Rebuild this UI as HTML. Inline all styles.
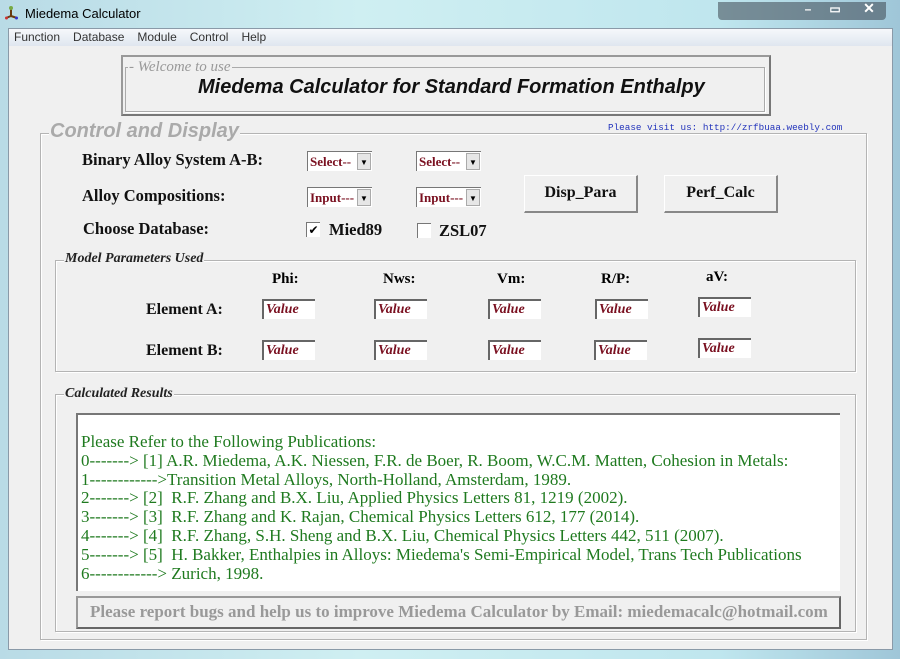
<!DOCTYPE html>
<html><head><style>
*{margin:0;padding:0;box-sizing:border-box}
body{width:900px;height:659px;overflow:hidden;position:relative;background:linear-gradient(90deg,#b9dbe6,#cfeff2 40%,#bfe6ee 80%,#9fc6d8);font-family:"Liberation Serif",serif}
.a{position:absolute}
.client{left:8px;top:28px;width:885px;height:622px;background:#f0f0f0;border:1px solid #8a9aa8}
.menu{left:9px;top:29px;width:883px;height:17px;background:linear-gradient(#f6f8fb,#dfe6ef);font:12px "Liberation Sans",sans-serif;color:#333}
.menu span{margin-left:5px;margin-right:8px;line-height:17px}
.lbl{font-weight:bold;font-size:16.5px;color:#111}
.sel{background:#fff;border-top:1px solid #777;border-left:1px solid #777;height:20px;width:65px;font-weight:bold;font-size:13px;color:#7a1020;padding-left:2px;line-height:19px}
.sel i{position:absolute;right:1px;top:1px;width:14px;height:17px;background:#e6e6e6;border:1px solid #aaa;font-style:normal;color:#000;font-size:8px;text-align:center;line-height:17px}
.val{background:#fff;border-top:2px solid #666;border-left:2px solid #666;width:53px;height:20px;font-style:italic;font-weight:bold;font-size:14px;color:#7a1020;padding-left:2px;line-height:18px}
.grp{border:1px solid #b4b4b4;box-shadow:inset 1px 1px #fff,1px 1px #fff}
.gt{background:#f0f0f0;font-style:italic;font-weight:bold;font-size:14px;color:#222;padding:0 1px}
.btn{background:#f0f0f0;border:1px solid #fff;border-right:2px solid #888;border-bottom:2px solid #888;font-weight:bold;font-size:16px;text-align:center;line-height:34px;color:#111}
.hd{font-weight:bold;font-size:15px}
.cb{width:14px;height:15px;background:#fff;border-top:1px solid #777;border-left:1px solid #777;font-size:12px;line-height:14px;text-align:center}
.res{left:76px;top:413px;width:764px;height:178px;background:#fff;border-top:2px solid #777;border-left:2px solid #777;color:#1f7a1f;font-size:17px;line-height:18.8px;padding:18px 0 0 3px;white-space:pre;overflow:hidden}
</style></head><body>
<div class="a" style="left:5px;top:6px;width:13px;height:14px"><svg width="13" height="14"><line x1="6" y1="2" x2="6" y2="10" stroke="#6a3a10" stroke-width="2"/><line x1="6" y1="10" x2="1" y2="12" stroke="#6a3a10" stroke-width="2"/><line x1="6" y1="10" x2="12" y2="12" stroke="#6a3a10" stroke-width="2"/><circle cx="6" cy="2" r="2" fill="#7a4"/><circle cx="1.5" cy="12" r="1.5" fill="#c33"/><circle cx="11.5" cy="12" r="1.5" fill="#33c"/></svg></div>
<div class="a" style="left:25px;top:6px;font:13px 'Liberation Sans',sans-serif;color:#000">Miedema Calculator</div>
<div class="a" style="left:718px;top:2px;width:168px;height:18px;background:rgba(60,70,80,.55);border-radius:0 0 4px 4px"></div>
<div class="a" style="left:822px;top:2px;width:26px;height:16px;color:#fff;font:bold 12px 'Liberation Sans';text-align:center">▭</div>
<div class="a" style="left:795px;top:2px;width:26px;height:16px;color:#fff;font:bold 12px 'Liberation Sans';text-align:center">–</div>
<div class="a" style="left:852px;top:0px;width:34px;height:18px;color:#fff;font:bold 14px 'Liberation Sans';text-align:center">✕</div>
<div class="a client"></div>
<div class="a menu"><span>Function</span><span>Database</span><span>Module</span><span>Control</span><span>Help</span></div>

<div class="a" style="left:121px;top:55px;width:650px;height:61px;border:2px solid #999;border-right-color:#777;border-bottom-color:#777"></div>
<div class="a" style="left:125px;top:67px;width:640px;height:45px;border:1px solid #aaa;box-shadow:1px 1px #fff"></div>
<div class="a gt" style="left:128px;top:59px;font-weight:normal;color:#999;font-size:15px">- Welcome to use</div>
<div class="a" style="left:198px;top:76px;font:italic bold 20px 'Liberation Sans',sans-serif;color:#111">Miedema Calculator for Standard Formation Enthalpy</div>

<div class="a grp" style="left:40px;top:133px;width:827px;height:507px"></div>
<div class="a gt" style="left:49px;top:120px;font-family:'Liberation Sans',sans-serif;font-size:20px;color:#aaa">Control and Display</div>
<div class="a" style="left:608px;top:122px;font:9.3px 'Liberation Mono',monospace;color:#2233bb">Please visit us: http://zrfbuaa.weebly.com</div>

<div class="a lbl" style="left:82px;top:150px">Binary Alloy System A-B:</div>
<div class="a lbl" style="left:82px;top:186px">Alloy Compositions:</div>
<div class="a lbl" style="left:83px;top:219px">Choose Database:</div>
<div class="a sel" style="left:307px;top:151px">Select--<i>▼</i></div>
<div class="a sel" style="left:416px;top:151px">Select--<i>▼</i></div>
<div class="a sel" style="left:307px;top:187px">Input---<i>▼</i></div>
<div class="a sel" style="left:416px;top:187px">Input---<i>▼</i></div>
<div class="a cb" style="left:306px;top:222px">✔</div>
<div class="a lbl" style="left:329px;top:220px">Mied89</div>
<div class="a cb" style="left:417px;top:223px"></div>
<div class="a lbl" style="left:439px;top:221px">ZSL07</div>
<div class="a btn" style="left:524px;top:175px;width:114px;height:38px">Disp_Para</div>
<div class="a btn" style="left:664px;top:175px;width:114px;height:38px">Perf_Calc</div>

<div class="a grp" style="left:55px;top:260px;width:801px;height:112px"></div>
<div class="a gt" style="left:64px;top:251px">Model Parameters Used</div>
<div class="a hd" style="left:272px;top:271px">Phi:</div>
<div class="a hd" style="left:383px;top:271px">Nws:</div>
<div class="a hd" style="left:497px;top:271px">Vm:</div>
<div class="a hd" style="left:601px;top:271px">R/P:</div>
<div class="a hd" style="left:706px;top:269px">aV:</div>
<div class="a lbl" style="left:146px;top:301px;font-size:16px">Element A:</div>
<div class="a lbl" style="left:146px;top:342px;font-size:16px">Element B:</div>
<div class="a val" style="left:262px;top:299px">Value</div>
<div class="a val" style="left:374px;top:299px">Value</div>
<div class="a val" style="left:488px;top:299px">Value</div>
<div class="a val" style="left:595px;top:299px">Value</div>
<div class="a val" style="left:698px;top:297px">Value</div>
<div class="a val" style="left:262px;top:340px">Value</div>
<div class="a val" style="left:374px;top:340px">Value</div>
<div class="a val" style="left:488px;top:340px">Value</div>
<div class="a val" style="left:594px;top:340px">Value</div>
<div class="a val" style="left:698px;top:338px">Value</div>

<div class="a grp" style="left:55px;top:394px;width:801px;height:238px"></div>
<div class="a gt" style="left:64px;top:386px">Calculated Results</div>
<div class="a res">Please Refer to the Following Publications:
0-------&gt; [1] A.R. Miedema, A.K. Niessen, F.R. de Boer, R. Boom, W.C.M. Matten, Cohesion in Metals:
1------------&gt;Transition Metal Alloys, North-Holland, Amsterdam, 1989.
2-------&gt; [2]  R.F. Zhang and B.X. Liu, Applied Physics Letters 81, 1219 (2002).
3-------&gt; [3]  R.F. Zhang and K. Rajan, Chemical Physics Letters 612, 177 (2014).
4-------&gt; [4]  R.F. Zhang, S.H. Sheng and B.X. Liu, Chemical Physics Letters 442, 511 (2007).
5-------&gt; [5]  H. Bakker, Enthalpies in Alloys: Miedema's Semi-Empirical Model, Trans Tech Publications
6------------&gt; Zurich, 1998.</div>
<div class="a" style="left:76px;top:596px;width:765px;height:33px;border:2px solid #999;border-right-color:#666;border-bottom-color:#666;font-weight:bold;font-size:17px;color:#999;line-height:28px;padding-left:12px;white-space:nowrap">Please report bugs and help us to improve Miedema Calculator by Email: miedemacalc@hotmail.com</div>
</body></html>
